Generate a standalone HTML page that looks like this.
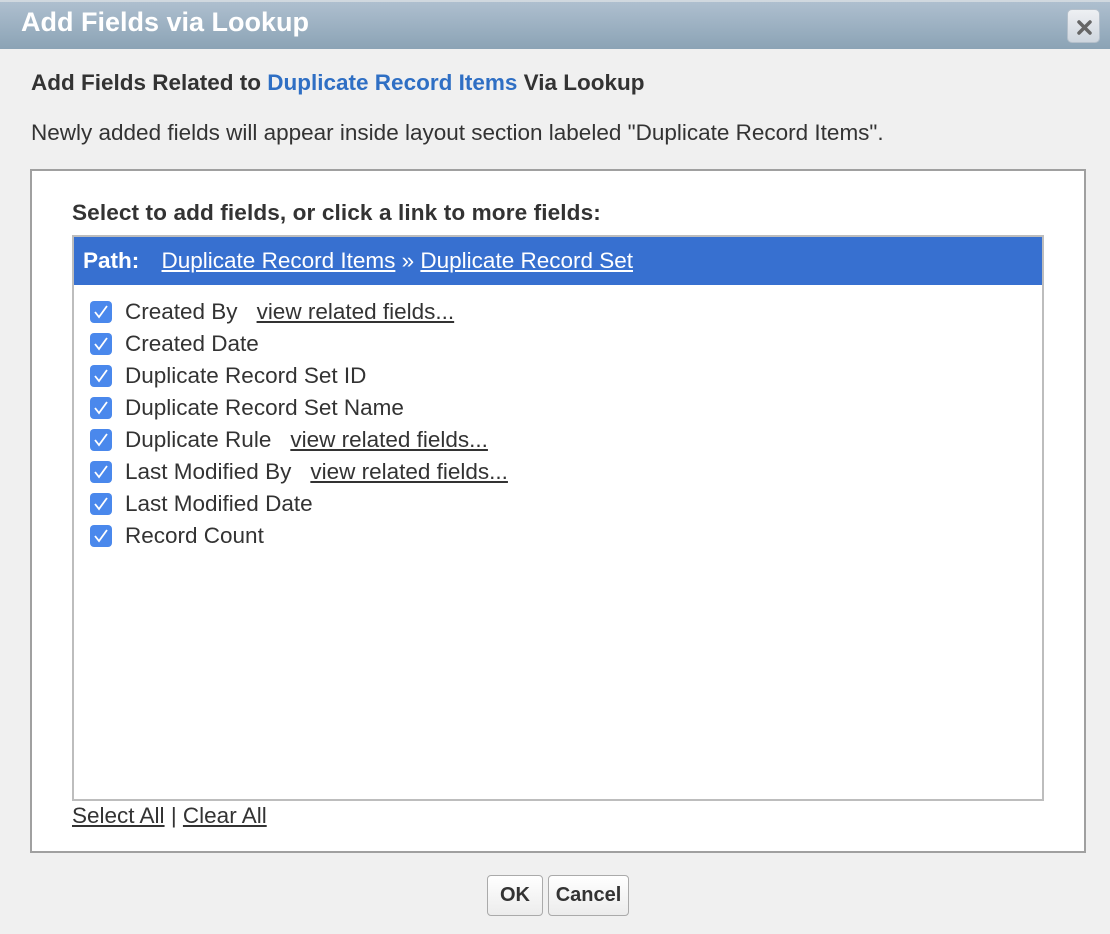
<!DOCTYPE html>
<html><head><style>
*{margin:0;padding:0;box-sizing:border-box}
body{width:1110px;height:934px;background:#f0f0f0;font-family:"Liberation Sans",Arial,sans-serif;color:#333;position:relative;overflow:hidden}
.hdr{position:absolute;left:0;top:0;width:1110px;height:49px;background:linear-gradient(#aebfcf,#8ba3b5);border-top:2px solid #d0d8df}
.hdr h1{position:absolute;left:21px;top:5px;font-size:27px;color:#fff;font-weight:bold}
.x{position:absolute;left:1067px;top:7px;width:33px;height:34px;border-radius:5px;background:linear-gradient(#eef0f3,#cfd6de);border:1px solid #b5c0cb}
.t1{position:absolute;left:31px;top:70px;font-size:22.5px;font-weight:bold;white-space:nowrap}
.t1 span{color:#2f6fc4}
.t2{position:absolute;left:31px;top:120px;font-size:22.5px;white-space:nowrap}
.box{position:absolute;left:30px;top:169px;width:1056px;height:684px;background:#fff;border:2px solid #a0a0a0}
.lbl{position:absolute;left:72px;top:200px;font-size:22.6px;font-weight:bold;white-space:nowrap;letter-spacing:0.1px}
.list{position:absolute;left:72px;top:235px;width:972px;height:566px;border:2px solid #bdbdbd;background:#fff}
.path{height:48px;background:#3770d0;color:#fff;font-size:22.5px;padding:11px 0 0 9px;white-space:nowrap}
.path b{margin-right:16px}
.path u{color:#fff}
.row{position:absolute;left:16px;font-size:22.5px;height:32px;display:flex;align-items:center;white-space:nowrap}
.cb{width:22px;height:22px;border-radius:4px;background:#4a88ec;margin-right:13px;display:flex;align-items:center;justify-content:center}
.row u{margin-left:19px}
.sa{position:absolute;left:72px;top:803px;font-size:22.5px}
.btn{position:absolute;top:875px;height:41px;border:1px solid #aaa;border-radius:4px;background:linear-gradient(#fff,#ececec);font-size:20px;font-weight:bold;display:flex;align-items:center;justify-content:center;color:#333}
</style></head><body>
<div class="hdr"><h1>Add Fields via Lookup</h1>
<div class="x"><svg width="33" height="34" viewBox="0 0 33 34"><path d="M11 12L22 23M22 12L11 23" stroke="#666" stroke-width="3.5" stroke-linecap="round"/></svg></div></div>
<div class="t1">Add Fields Related to <span>Duplicate Record Items</span> Via Lookup</div>
<div class="t2">Newly added fields will appear inside layout section labeled "Duplicate Record Items".</div>
<div class="box"></div>
<div class="lbl">Select to add fields, or click a link to more fields:</div>
<div class="list">
<div class="path"><b>Path:</b> <u>Duplicate Record Items</u> » <u>Duplicate Record Set</u></div>
<div class="row" style="top:59px"><div class="cb"><svg width="16" height="14"><path d="M2 7L6 12L14 1" stroke="#fff" stroke-width="1.8" fill="none"/></svg></div>Created By<u>view related fields...</u></div>
<div class="row" style="top:91px"><div class="cb"><svg width="16" height="14"><path d="M2 7L6 12L14 1" stroke="#fff" stroke-width="1.8" fill="none"/></svg></div>Created Date</div>
<div class="row" style="top:123px"><div class="cb"><svg width="16" height="14"><path d="M2 7L6 12L14 1" stroke="#fff" stroke-width="1.8" fill="none"/></svg></div>Duplicate Record Set ID</div>
<div class="row" style="top:155px"><div class="cb"><svg width="16" height="14"><path d="M2 7L6 12L14 1" stroke="#fff" stroke-width="1.8" fill="none"/></svg></div>Duplicate Record Set Name</div>
<div class="row" style="top:187px"><div class="cb"><svg width="16" height="14"><path d="M2 7L6 12L14 1" stroke="#fff" stroke-width="1.8" fill="none"/></svg></div>Duplicate Rule<u>view related fields...</u></div>
<div class="row" style="top:219px"><div class="cb"><svg width="16" height="14"><path d="M2 7L6 12L14 1" stroke="#fff" stroke-width="1.8" fill="none"/></svg></div>Last Modified By<u>view related fields...</u></div>
<div class="row" style="top:251px"><div class="cb"><svg width="16" height="14"><path d="M2 7L6 12L14 1" stroke="#fff" stroke-width="1.8" fill="none"/></svg></div>Last Modified Date</div>
<div class="row" style="top:283px"><div class="cb"><svg width="16" height="14"><path d="M2 7L6 12L14 1" stroke="#fff" stroke-width="1.8" fill="none"/></svg></div>Record Count</div>
</div>
<div class="sa"><u>Select All</u> | <u>Clear All</u></div>
<div class="btn" style="left:487px;width:56px">OK</div>
<div class="btn" style="left:548px;width:81px">Cancel</div>
</body></html>
